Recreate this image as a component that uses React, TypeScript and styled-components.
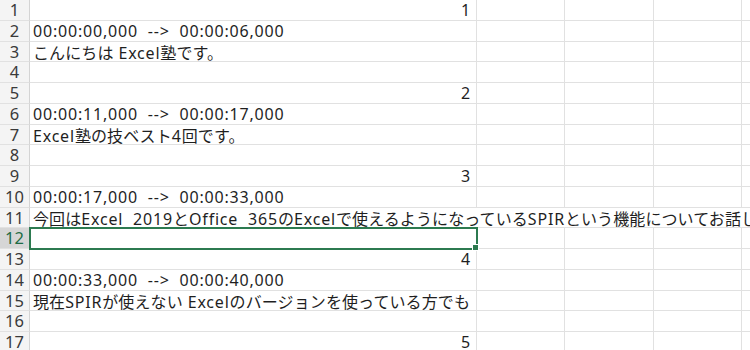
import React from "react";
import styled, { createGlobalStyle, css } from "styled-components";

const Global = createGlobalStyle`
  html, body { margin: 0; padding: 0; background: #ffffff; }
  body { font-family: "Noto Sans", "Noto Sans CJK JP", sans-serif; }
`;

const ROW_H = 20.75;
const GRID = "#e1e1e1";

const Sheet = styled.div`
  display: grid;
  grid-template-columns: 30px 447px 88px 89px 88px 1fr;
  grid-auto-rows: ${ROW_H}px;
  width: 750px;
  height: 350px;
  overflow: hidden;
  background: #fff;
`;

const RowHead = styled.div<{ $active?: boolean }>`
  box-sizing: border-box;
  display: flex;
  align-items: center;
  justify-content: center;
  background: ${(p) => (p.$active ? "#d6d6d6" : "#f4f4f4")};
  color: ${(p) => (p.$active ? "#1e6b45" : "#3a3a3a")};
  border-right: 1px solid #d4d4d4;
  border-bottom: 1px solid ${GRID};
  font-family: "Noto Sans", sans-serif;
  font-size: 16.5px;
  line-height: 1;
  padding-top: 1px;
`;

const Cell = styled.div<{ $align?: "left" | "right"; $span?: number; $selected?: boolean }>`
  box-sizing: border-box;
  position: relative;
  display: flex;
  align-items: center;
  justify-content: ${(p) => (p.$align === "right" ? "flex-end" : "flex-start")};
  padding: 1px 5px 0 3px;
  border-right: 1px solid ${GRID};
  border-bottom: 1px solid ${GRID};
  color: #1f1f1f;
  font-size: 16px;
  letter-spacing: 0.1px;
  white-space: pre;
  overflow: hidden;
  ${(p) => p.$span && css`grid-column: span ${p.$span};`}
  ${(p) =>
    p.$selected &&
    css`
      overflow: visible;
      outline: 2px solid #2c7a50;
      outline-offset: -1px;
      z-index: 1;
      &::after {
        content: "";
        position: absolute;
        right: -3px;
        bottom: -3px;
        width: 5px;
        height: 5px;
        background: #2c7a50;
        border: 1px solid #fff;
      }
    `}
`;

const Latin = styled.span`
  letter-spacing: 0.8px;
`;

const Rich = ({ text }: { text: string }) => (
  <span>
    {text.split(/([\x00-\x7F]+)/).map((part, i) =>
      part === "" ? null : /^[\x00-\x7F]+$/.test(part) ? (
        <Latin key={i}>{part}</Latin>
      ) : (
        <React.Fragment key={i}>{part}</React.Fragment>
      )
    )}
  </span>
);

type Row = { a?: string; right?: boolean; span?: boolean };

const rows: Row[] = [
  { a: "1", right: true },
  { a: "00:00:00,000  -->  00:00:06,000" },
  { a: "こんにちは Excel塾です。" },
  {},
  { a: "2", right: true },
  { a: "00:00:11,000  -->  00:00:17,000" },
  { a: "Excel塾の技ベスト4回です。" },
  {},
  { a: "3", right: true },
  { a: "00:00:17,000  -->  00:00:33,000" },
  {
    a: "今回はExcel  2019とOffice  365のExcelで使えるようになっているSPIRという機能についてお話しします。",
    span: true,
  },
  {},
  { a: "4", right: true },
  { a: "00:00:33,000  -->  00:00:40,000" },
  { a: "現在SPIRが使えない Excelのバージョンを使っている方でも" },
  {},
  { a: "5", right: true },
];

export default function App() {
  return (
    <>
      <Global />
      <Sheet>
        {rows.map((r, i) => {
          const n = i + 1;
          const selected = n === 12;
          return (
            <React.Fragment key={n}>
              <RowHead $active={selected}>{n}</RowHead>
              {r.span ? (
                <Cell $span={5}>
                  <Rich text={r.a ?? ""} />
                </Cell>
              ) : (
                <>
                  <Cell $align={r.right ? "right" : "left"} $selected={selected}>
                    {r.a ? <Rich text={r.a} /> : null}
                  </Cell>
                  <Cell />
                  <Cell />
                  <Cell />
                  <Cell />
                </>
              )}
            </React.Fragment>
          );
        })}
      </Sheet>
    </>
  );
}
